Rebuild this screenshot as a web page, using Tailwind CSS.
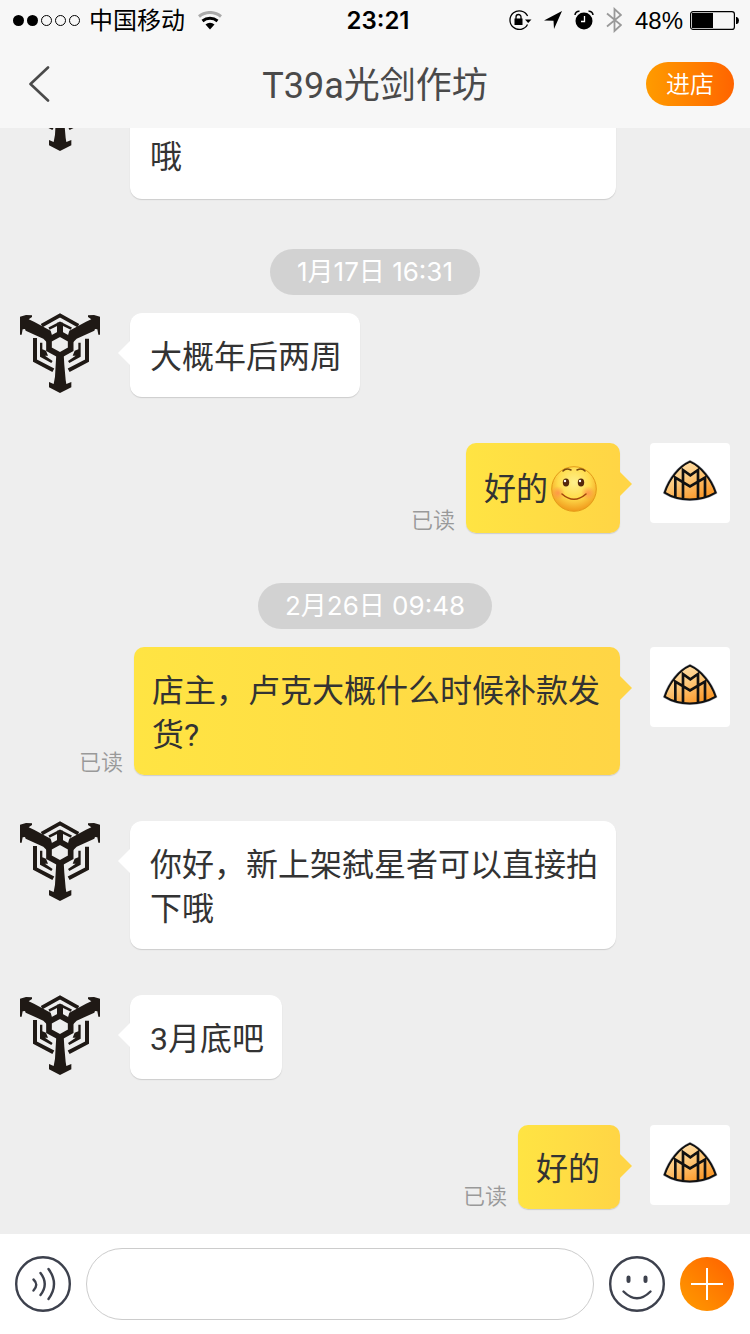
<!DOCTYPE html>
<html lang="zh-CN">
<head>
  <meta charset="UTF-8" />
  <meta name="viewport" content="width=device-width, initial-scale=1.0"/>
  <title>T39a光剑作坊</title>
  <script src="https://cdn.jsdelivr.net/npm/@tailwindcss/browser@4"></script>
</head>
<body class="h-screen flex flex-col bg-[#eeeeee] text-[#333333] font-['Roboto','Noto_Sans_CJK_SC',sans-serif]">

  <!-- Shared drawings -->
  <svg class="absolute size-0">
    <defs>
      <linearGradient id="gold" x1="0" y1="0" x2="0.6" y2="1">
        <stop offset="0" stop-color="#ffe6ba"/>
        <stop offset="0.5" stop-color="#fdcb80"/>
        <stop offset="1" stop-color="#fb9a2c"/>
      </linearGradient>
      <radialGradient id="face" cx="0.5" cy="0.35" r="0.65">
        <stop offset="0" stop-color="#fff08c"/>
        <stop offset="0.55" stop-color="#ffdc4c"/>
        <stop offset="1" stop-color="#f0981a"/>
      </radialGradient>
      <radialGradient id="blush">
        <stop offset="0" stop-color="#ff8a4a" stop-opacity="0.8"/>
        <stop offset="1" stop-color="#ff8a4a" stop-opacity="0"/>
      </radialGradient>
    </defs>
    <symbol id="shop" viewBox="30 39 240 240">
      <g fill="none" stroke="#1f1915">
        <path stroke-width="11" d="M95 77L150 46L205 77"/>
        <path stroke-width="8" d="M117 86L150 69L184 86"/>
        <path stroke-width="18" d="M150 68V104"/>
        <path stroke-width="17" d="M150 101L182 119V148L150 166L117 148V119Z"/>
        <path stroke-width="12" d="M75 114V182L130 211M231 116V182L176 211"/>
      </g>
      <g fill="#1f1915">
        <path id="arm" d="M30 57V50L48 45L66 46V51L56 58L72 65L122 92L126 106L112 128L100 116L47 92L45 87L38 88L35 104H30Z"/>
        <use href="#arm" transform="matrix(-1 0 0 1 300 0)"/>
        <path id="inner" d="M90 128H97V148L108 152L114 167H105L128 183L124 189L90 170Z"/>
        <use href="#inner" transform="matrix(-1 0 0 1 302 0)"/>
        <path d="M139 162H161L163 195L167 240L169 252L184 246V262L150 279L117 262V246L131 252L135 230L137 195Z"/>
      </g>
    </symbol>
    <symbol id="me" viewBox="0 0 240 240">
      <path d="M120 56C152 70 184 108 197 149C152 176 86 176 44 149C58 106 88 70 120 56Z" fill="#fff" stroke="#b5b9c4" stroke-width="9"/>
      <path d="M120 56C152 70 184 108 197 149C152 176 86 176 44 149C58 106 88 70 120 56Z" fill="url(#gold)"/>
      <path d="M76 164V104L120 130L165 104V164M99 166V81L121 97L144 81V166" fill="none" stroke="#111" stroke-width="8"/>
      <path d="M120 56C152 70 184 108 197 149C152 176 86 176 44 149C58 106 88 70 120 56Z" fill="none" stroke="#111" stroke-width="6"/>
    </symbol>
  </svg>

  <header class="shrink-0 bg-[#f7f7f7]">
    <!-- Status bar -->
    <div class="h-10 pl-[13px] pr-[11px] flex items-center justify-between text-black">
      <div class="flex-1 flex items-center">
        <svg class="w-[67px] h-[11px]" viewBox="0 0 67 11">
          <circle cx="5.5" cy="5.5" r="5.5"/><circle cx="19.5" cy="5.5" r="5.5"/>
          <g fill="none" stroke="#000">
            <circle cx="33.5" cy="5.5" r="5"/><circle cx="47.5" cy="5.5" r="5"/><circle cx="61.5" cy="5.5" r="5"/>
          </g>
        </svg>
        <span class="ml-[9px] pt-[2px] text-2xl">中国移动</span>
        <svg class="ml-[13px] w-6 h-[19px]" viewBox="0 0 24 19" fill="none">
          <path d="M1 5.500A17 17 0 0 1 23 5.500" stroke="#aaa" stroke-width="3"/>
          <path d="M4.500 10A12 12 0 0 1 19.500 10" stroke="#000" stroke-width="3"/>
          <path d="M7.500 13.500A7 7 0 0 1 16.500 13.500L12 18.500Z" fill="#000"/>
        </svg>
      </div>
      <span class="ml-1 pt-[2px] font-['Inter',sans-serif] font-semibold text-2xl">23:21</span>
      <div class="flex-1 flex items-center justify-end">
        <svg class="w-6 h-5" viewBox="0 0 24 20">
          <path d="M19.500 14.500A9.300 9.300 0 1 1 19.600 6" fill="none" stroke="#000" stroke-width="1.300"/>
          <path d="M17 9.500H23.500L20.200 13Z"/>
          <rect x="6.500" y="8.500" width="8" height="6.500"/>
          <path d="M8 9V7A2.500 2.500 0 0 1 13 7V9" fill="none" stroke="#000" stroke-width="1.300"/>
        </svg>
        <svg class="ml-3 w-[18px] h-[18px]" viewBox="0 0 18 18"><path d="M0 9.500L18 0L10 18L9.500 9.800Z"/></svg>
        <svg class="ml-3 w-5 h-5" viewBox="0 0 20 20">
          <circle cx="10" cy="11" r="8.500"/>
          <path d="M1 5A4 4 0 0 1 5.500 1.200M19 5A4 4 0 0 0 14.500 1.200" fill="none" stroke="#000" stroke-width="1.500"/>
          <path d="M10.500 6V11.500H7" fill="none" stroke="#fff" stroke-width="1.300"/>
        </svg>
        <svg class="ml-3 w-4 h-[26px]" viewBox="0 0 16 26"><path d="M1 6.500L15 18L8.500 24V2L15 8L1 19.500" fill="none" stroke="#999" stroke-width="1.800"/></svg>
        <span class="ml-[13px] pt-[2px] font-['Liberation_Sans',sans-serif] text-2xl">48%</span>
        <svg class="ml-[7px] w-[49px] h-[19px]" viewBox="0 0 49 19">
          <rect x="0.600" y="0.600" width="43.800" height="17.800" rx="2.500" fill="none" stroke="#000" stroke-width="1.200"/>
          <rect x="2" y="2" width="21" height="15"/>
          <path d="M46 6H47Q49 7 49 9.500Q49 12 47 13H46Z"/>
        </svg>
      </div>
    </div>

    <!-- Title bar -->
    <div class="h-[88px] px-4 grid grid-cols-[1fr_auto_1fr] items-center">
      <button type="button" aria-label="返回" class="justify-self-start pl-3">
        <svg class="w-[22px] h-9" viewBox="0 0 22 36"><path d="M20 1.500L2.500 18L20 34.500" fill="none" stroke="#4a4a4a" stroke-width="2.600" stroke-linecap="round" stroke-linejoin="round"/></svg>
      </button>
      <h1 class="pt-1 text-4xl font-normal text-[#4a4a4a]">T39a光剑作坊</h1>
      <button type="button" class="justify-self-end w-[88px] h-11 pt-[2px] rounded-full bg-linear-to-r from-[#ff9b00] to-[#ff6400] text-white text-2xl font-[350]">进店</button>
    </div>
  </header>

  <!-- Messages, scrolled to the newest -->
  <main class="flex-1 min-h-0 overflow-hidden flex flex-col justify-end gap-[50px] px-5 pb-[25px] text-[32px] leading-[44px]">
    <section>
      <div class="flex items-start gap-[30px]">
        <svg class="shrink-0 size-20"><use href="#shop"/></svg>
        <p class="relative max-w-[486px] py-5 pl-5 pr-[18px] bg-white rounded-xl shadow-[0_1px_1px_#cccccc]">你好，这个大概需要两周时间发哦</p>
      </div>
    </section>

    <section>
      <div class="flex justify-center mb-[18px]">
        <time class="px-[27px] rounded-full bg-[#d2d2d2] text-white text-[26px] leading-[46px] font-['Inter','Noto_Sans_CJK_SC',sans-serif]">1月17日 16:31</time>
      </div>
      <div class="flex flex-col gap-[46px]">
        <div class="flex items-start gap-[30px]">
          <svg class="shrink-0 size-20"><use href="#shop"/></svg>
          <p class="relative max-w-[486px] pt-[22px] pb-[18px] pl-5 pr-[18px] bg-white rounded-xl shadow-[0_1px_1px_#cccccc]">
            <svg class="absolute -left-3 top-7 w-3 h-6" viewBox="0 0 12 24"><path d="M12 0L0 12L12 24Z" fill="#fff"/></svg>
            大概年后两周
          </p>
        </div>
        <div class="flex items-start justify-end gap-[30px]">
          <div class="flex items-end gap-[11px]">
            <span class="shrink-0 text-[22px] leading-[24px] font-[350] text-[#999999]">已读</span>
            <p class="relative max-w-[486px] min-h-[90px] pt-[2px] pl-[18px] pr-5 flex items-center rounded-[10px] bg-linear-to-r from-[#ffe443] to-[#ffd545] shadow-[0_1px_1px_#cccccc]">
              <svg class="absolute -right-3 top-[29px] w-3 h-6" viewBox="0 0 12 24"><path d="M0 0L12 12L0 24Z" fill="#ffd545"/></svg>
              好的
              <svg class="ml-[3px] mr-[3px] w-[46px] h-[46px]" viewBox="0 0 46 46" role="img" aria-label="微笑">
                <circle cx="23" cy="23" r="22.300" fill="url(#face)" stroke="#e39a18" stroke-width="1"/>
                <circle cx="7" cy="27" r="7" fill="url(#blush)"/><circle cx="37" cy="27" r="7" fill="url(#blush)"/>
                <ellipse cx="15" cy="16.500" rx="3.200" ry="4" fill="#54280c"/><ellipse cx="30" cy="16.500" rx="3.200" ry="4" fill="#54280c"/>
                <circle cx="14" cy="15" r="1.200" fill="#fff"/><circle cx="29" cy="15" r="1.200" fill="#fff"/>
                <path d="M11 28Q23 38.500 35 28" fill="none" stroke="#a4470c" stroke-width="1.600" stroke-linecap="round"/>
                <path d="M12 5Q15 1.500 20 4M26 4Q31 1.500 34 5" fill="none" stroke="#7a4a10" stroke-width="1.600" stroke-linecap="round"/>
              </svg>
            </p>
          </div>
          <svg class="shrink-0 size-20 rounded-sm bg-white"><use href="#me"/></svg>
        </div>
      </div>
    </section>

    <section>
      <div class="flex justify-center mb-[18px]">
        <time class="px-[27px] rounded-full bg-[#d2d2d2] text-white text-[26px] leading-[46px] font-['Inter','Noto_Sans_CJK_SC',sans-serif]">2月26日 09:48</time>
      </div>
      <div class="flex flex-col gap-[46px]">
        <div class="flex items-start justify-end gap-[30px]">
          <div class="flex items-end gap-[11px]">
            <span class="shrink-0 text-[22px] leading-[24px] font-[350] text-[#999999]">已读</span>
            <p class="relative max-w-[486px] pt-[22px] pb-[18px] pl-[18px] pr-5 rounded-[10px] bg-linear-to-r from-[#ffe443] to-[#ffd545] shadow-[0_1px_1px_#cccccc]">
              <svg class="absolute -right-3 top-[29px] w-3 h-6" viewBox="0 0 12 24"><path d="M0 0L12 12L0 24Z" fill="#ffd545"/></svg>
              店主，卢克大概什么时候补款发货?
            </p>
          </div>
          <svg class="shrink-0 size-20 rounded-sm bg-white"><use href="#me"/></svg>
        </div>
        <div class="flex items-start gap-[30px]">
          <svg class="shrink-0 size-20"><use href="#shop"/></svg>
          <p class="relative max-w-[486px] pt-[22px] pb-[18px] pl-5 pr-[18px] bg-white rounded-xl shadow-[0_1px_1px_#cccccc]">
            <svg class="absolute -left-3 top-7 w-3 h-6" viewBox="0 0 12 24"><path d="M12 0L0 12L12 24Z" fill="#fff"/></svg>
            你好，新上架弑星者可以直接拍下哦
          </p>
        </div>
        <div class="flex items-start gap-[30px]">
          <svg class="shrink-0 size-20"><use href="#shop"/></svg>
          <p class="relative max-w-[486px] pt-[22px] pb-[18px] pl-5 pr-[18px] bg-white rounded-xl shadow-[0_1px_1px_#cccccc]">
            <svg class="absolute -left-3 top-7 w-3 h-6" viewBox="0 0 12 24"><path d="M12 0L0 12L12 24Z" fill="#fff"/></svg>
            3月底吧
          </p>
        </div>
        <div class="flex items-start justify-end gap-[30px]">
          <div class="flex items-end gap-[11px]">
            <span class="shrink-0 text-[22px] leading-[24px] font-[350] text-[#999999]">已读</span>
            <p class="relative max-w-[486px] pt-[22px] pb-[18px] pl-[18px] pr-5 rounded-[10px] bg-linear-to-r from-[#ffe443] to-[#ffd545] shadow-[0_1px_1px_#cccccc]">
              <svg class="absolute -right-3 top-[29px] w-3 h-6" viewBox="0 0 12 24"><path d="M0 0L12 12L0 24Z" fill="#ffd545"/></svg>
              好的
            </p>
          </div>
          <svg class="shrink-0 size-20 rounded-sm bg-white"><use href="#me"/></svg>
        </div>
      </div>
    </section>
  </main>

  <!-- Input bar -->
  <footer class="shrink-0 bg-white flex items-center gap-[15px] py-[14px] pl-[15px] pr-4">
    <button type="button" aria-label="语音">
      <svg class="size-14" viewBox="0 0 56 56" fill="none" stroke="#3d414d" stroke-width="2.400" stroke-linecap="round">
        <circle cx="28" cy="28" r="26.800"/>
        <path d="M18.500 23.500Q24 28.500 18.500 34.500M25.500 17Q34 28 25.500 39M33.500 13Q44.500 28 33.500 43"/>
      </svg>
    </button>
    <input type="text" aria-label="输入消息" class="flex-1 min-w-0 h-[72px] px-8 rounded-full border border-[#cccccc] bg-white text-[32px] outline-none">
    <button type="button" aria-label="表情">
      <svg class="size-14" viewBox="0 0 56 56" fill="none" stroke="#3d414d" stroke-width="2.400" stroke-linecap="round">
        <circle cx="28" cy="28" r="26.800"/>
        <path d="M14.500 35.500Q28 49 41.500 35.500"/>
        <path stroke-width="4" d="M19.500 21.500V25M36.500 21.500V25"/>
      </svg>
    </button>
    <button type="button" aria-label="更多" class="size-[54px] rounded-full bg-linear-to-tr from-[#ff9b00] to-[#ff5f00]">
      <svg class="size-full" viewBox="0 0 54 54"><path d="M11 27H43M27 11V43" stroke="#fff" stroke-width="2"/></svg>
    </button>
  </footer>
</body>
</html>
